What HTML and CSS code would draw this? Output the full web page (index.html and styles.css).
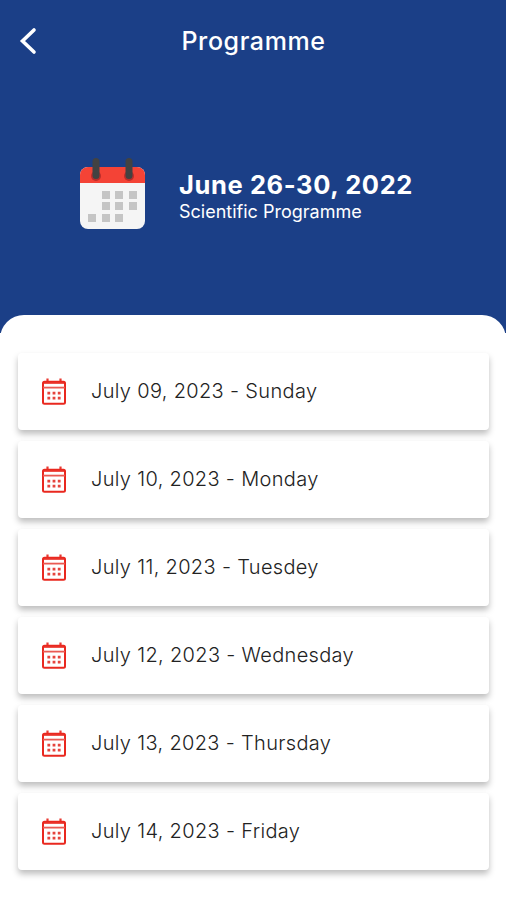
FILE: index.html
```html
<!DOCTYPE html>
<html lang="en">
<head>
<meta charset="UTF-8">
<meta name="viewport" content="width=device-width, initial-scale=1.0">
<title>Programme</title>
<link rel="stylesheet" href="styles.css">
</head>
<body>
  <svg class="defs" width="0" height="0">
    <symbol id="calendar" viewBox="0 0 24 27">
      <path d="M5.5 0.5v3.5M18.5 0.5v3.5" fill="none" stroke="#e93a32" stroke-width="2.2"/>
      <rect x="1" y="3.8" width="22" height="21.9" rx="1.5" fill="#fff" stroke="#e9281f" stroke-width="2"/>
      <path d="M1 5h22" stroke="#e9281f" stroke-width="1.6"/>
      <path d="M1 9.6h22" stroke="#ea5a53" stroke-width="1.8"/>
      <path d="M5.4 15.2h2.8M10.6 15.2h2.8M15.8 15.2h2.8M5.4 20.2h2.8M10.6 20.2h2.8M15.8 20.2h2.8" stroke="#e5443d" stroke-width="2.8"/>
    </symbol>
  </svg>
  <header class="header">
    <div class="navbar">
      <a class="back" href="#" aria-label="Back">
        <svg width="20" height="28" viewBox="0 0 20 28">
          <path d="M16 3L4.500 14l11.500 11" fill="none" stroke="#fff" stroke-width="3.6" stroke-linecap="round"/>
        </svg>
      </a>
      <h1 class="title">Programme</h1>
    </div>
    <div class="banner">
      <svg class="banner-icon" width="66" height="72" viewBox="0 0 66 72">
        <rect x="0" y="9" width="65" height="62" rx="8" fill="#f5f5f5"/>
        <path d="M0 25v-8a8 8 0 0 1 8-8h49a8 8 0 0 1 8 8v8z" fill="#f44336"/>
        <circle cx="16" cy="18" r="5" fill="#b92d2a"/>
        <circle cx="49" cy="18" r="5" fill="#b92d2a"/>
        <path d="M16 3.500v14M49 3.500v14" stroke="#424242" stroke-width="7" stroke-linecap="round"/>
        <g fill="#c5c5c5">
          <rect x="22" y="33" width="8" height="8"/>
          <rect x="35" y="33" width="8" height="8"/>
          <rect x="49" y="33" width="8" height="8"/>
          <rect x="22" y="44" width="8" height="8"/>
          <rect x="35" y="44" width="8" height="8"/>
          <rect x="49" y="44" width="8" height="8"/>
          <rect x="8" y="56" width="8" height="8"/>
          <rect x="22" y="56" width="8" height="8"/>
          <rect x="35" y="56" width="8" height="8"/>
        </g>
      </svg>
      <div class="banner-text">
        <h2 class="dates">June 26-30, 2022</h2>
        <p class="subtitle">Scientific Programme</p>
      </div>
    </div>
  </header>
  <main class="sheet">
    <a class="day" href="#"><svg class="day-icon"><use href="#calendar"/></svg><span>July 09, 2023 - Sunday</span></a>
    <a class="day" href="#"><svg class="day-icon"><use href="#calendar"/></svg><span>July 10, 2023 - Monday</span></a>
    <a class="day" href="#"><svg class="day-icon"><use href="#calendar"/></svg><span>July 11, 2023 - Tuesdey</span></a>
    <a class="day" href="#"><svg class="day-icon"><use href="#calendar"/></svg><span>July 12, 2023 - Wednesday</span></a>
    <a class="day" href="#"><svg class="day-icon"><use href="#calendar"/></svg><span>July 13, 2023 - Thursday</span></a>
    <a class="day" href="#"><svg class="day-icon"><use href="#calendar"/></svg><span>July 14, 2023 - Friday</span></a>
  </main>
</body>
</html>
```

FILE: styles.css
```css
* {
  box-sizing: border-box;
}

body {
  margin: 0;
  height: 900px;
  overflow: hidden;
  background-color: #fff;
  font-family: Inter, sans-serif;
}

.defs {
  display: block;
}

.header {
  height: 333px;
  background-color: #1b3f87;
  color: #fff;
}

.navbar {
  display: grid;
  grid-template-columns: 61px 1fr 60px;
  align-items: center;
  height: 82px;
}

.back {
  display: flex;
  padding-left: 18px;
}

.title {
  margin: 0;
  text-align: center;
  font-size: 25px;
  font-weight: 500;
  letter-spacing: 0.6px;
}

.banner {
  display: flex;
  padding: 76px 0 0 80px;
}

.banner-text {
  padding: 11px 0 0 33px;
}

.dates {
  margin: 0;
  font-size: 25.5px;
  font-weight: 700;
  line-height: 32px;
  letter-spacing: 0.6px;
}

.subtitle {
  margin: 0;
  font-size: 18px;
  line-height: 21px;
}

/* Overlaps the bottom of the header */
.sheet {
  display: flex;
  flex-direction: column;
  gap: 11px;
  height: 585px;
  margin-top: -18px;
  padding: 38px 17px 0 18px;
  border-radius: 24px 24px 0 0;
  background-color: #fff;
}

.day {
  display: flex;
  align-items: center;
  height: 77px;
  padding: 0 0 1px 24px;
  border-radius: 4px;
  background-color: #fff;
  box-shadow: 0 4px 6px rgba(0, 0, 0, 0.26);
  color: #222;
  font-size: 20px;
  font-weight: 300;
  letter-spacing: 0.33px;
  text-decoration: none;
}

.day-icon {
  width: 24px;
  height: 27px;
  margin-right: 25px;
}
```
